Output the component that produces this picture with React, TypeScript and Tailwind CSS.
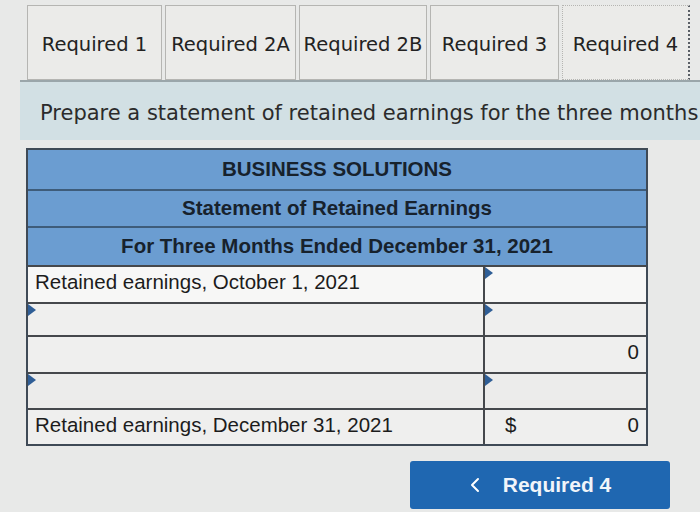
import React from 'react';

const tabs = ['Required 1', 'Required 2A', 'Required 2B', 'Required 3', 'Required 4'];
const tabWidths = ['w-[135px]', 'w-[131px]', 'w-[128px]', 'w-[129px]', 'w-[128px]'];

const Marker = () => (
    <span className="absolute left-0 top-0 w-0 h-0 border-y-[6px] border-y-transparent border-l-[8px] border-l-[#2f5e96]" />
);

const Cell = ({ children, marker, className = '' }: { children?: React.ReactNode; marker?: boolean; className?: string }) => (
    <div className={`relative flex items-center px-[7px] pb-[4px] ${className}`}>
        {marker && <Marker />}
        {children}
    </div>
);

const rows = [
    { label: 'Retained earnings, October 1, 2021', value: '', markLeft: false, markRight: true, h: 'h-[37px]', bg: 'bg-[#f7f7f6]' },
    { label: '', value: '', markLeft: true, markRight: true, h: 'h-[33px]', bg: 'bg-[#efefee]' },
    { label: '', value: '0', markLeft: false, markRight: false, h: 'h-[37px]', bg: 'bg-[#efefee]' },
    { label: '', value: '', markLeft: true, markRight: true, h: 'h-[36px]', bg: 'bg-[#ececeb]' },
];

const App = () => {
    return (
        <div className="w-[700px] h-[512px] overflow-hidden bg-[#e8e9e8] relative" style={{ fontFamily: '"Liberation Sans", Arial, sans-serif' }}>
            {/* tabs */}
            <div className="flex gap-[3px] pl-[27px] pt-[5px] font-['DejaVu_Sans',sans-serif] text-[19.5px] text-[#222]">
                {tabs.map((t, i) => (
                    <div
                        key={t}
                        className={`${tabWidths[i]} h-[75px] flex items-center justify-center pt-[4px] whitespace-nowrap bg-[#ebebe9] border border-[#b5b5b2] ${i === 4 ? 'border-r-2 border-r-[#5a5f66] border-dotted' : ''}`}
                    >
                        {t}
                    </div>
                ))}
            </div>

            {/* instructions band */}
            <div className="ml-[20px] h-[60px] bg-[#d2e0e4] border-t-2 border-[#9aa6aa] flex items-center pl-[20px] pt-[6px] font-['DejaVu_Sans',sans-serif] text-[21px] text-[#2b2b2b] whitespace-nowrap overflow-hidden">
                Prepare a statement of retained earnings for the three months
            </div>

            {/* statement table */}
            <div className="ml-[26px] mt-[8px] w-[622px] border-2 border-[#3f4a56]">
                <div className="bg-[#6b9dd1] text-[#17222d] font-bold text-[20.5px]">
                    <div className="h-[41px] flex items-center justify-center border-b-2 border-[#3e5c7a]">BUSINESS SOLUTIONS</div>
                    <div className="h-[37px] flex items-center justify-center border-b-2 border-[#3e5c7a]">Statement of Retained Earnings</div>
                    <div className="h-[37px] flex items-center justify-center">For Three Months Ended December 31, 2021</div>
                </div>
                <div className="text-[20.5px] text-[#1c1c1c]">
                    {rows.map((r, i) => (
                        <div key={i} className={`flex ${r.h} border-t-2 border-[#45484c]`}>
                            <Cell marker={r.markLeft} className={`w-[455px] ${r.bg}`}>{r.label}</Cell>
                            <Cell marker={r.markRight} className={`flex-1 justify-end border-l-2 border-[#45484c] ${r.bg}`}>{r.value}</Cell>
                        </div>
                    ))}
                    <div className="flex h-[36px] border-t-2 border-[#45484c]">
                        <Cell className="w-[455px] bg-[#efefee]">Retained earnings, December 31, 2021</Cell>
                        <Cell className="flex-1 justify-between border-l-2 border-[#45484c] bg-[#efefee] pl-[20px]">
                            <span>$</span>
                            <span>0</span>
                        </Cell>
                    </div>
                </div>
            </div>

            {/* nav button */}
            <div className="ml-[410px] mt-[15px] w-[260px] h-[48px] rounded-[3px] bg-[#1f67b1] flex items-center justify-center gap-[22px] text-white">
                <svg width="12" height="18" viewBox="0 0 12 18" fill="none">
                    <path d="M9 3 L3 9 L9 15" stroke="white" strokeWidth="2" strokeLinecap="round" strokeLinejoin="round" />
                </svg>
                <span className="font-bold text-[21px] text-[#f1f5fa]">Required 4</span>
            </div>
        </div>
    );
};

export default App;
